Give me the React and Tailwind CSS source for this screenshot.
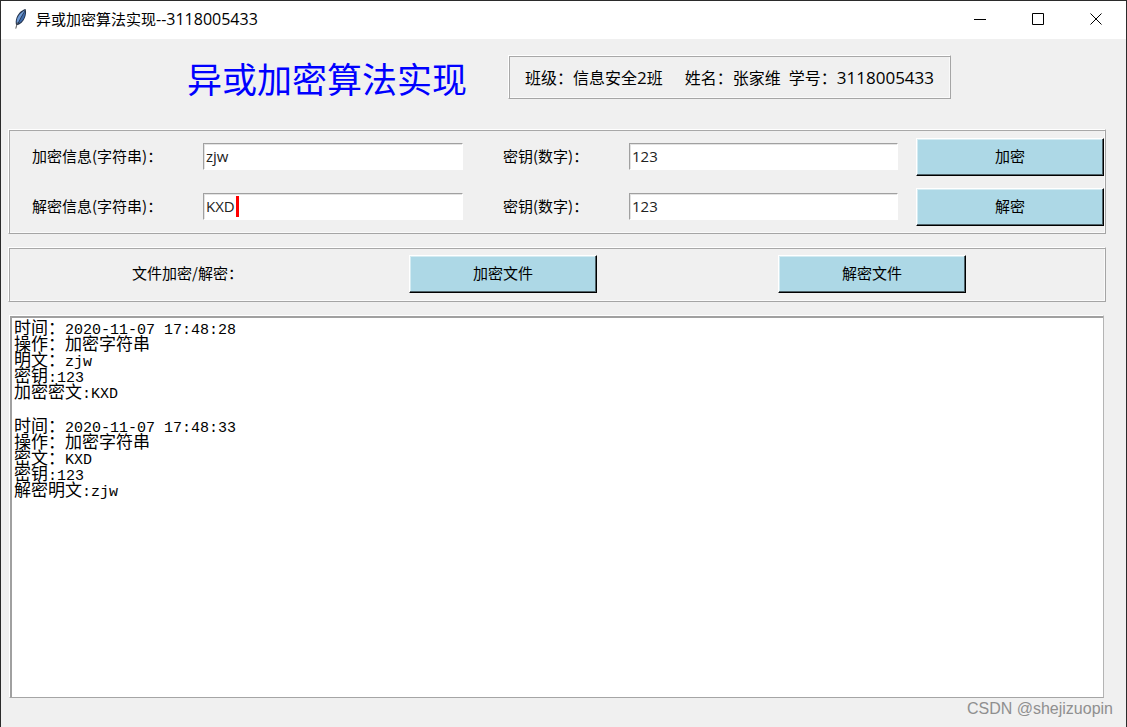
import React from "react";

const ridge =
  "border border-t-white border-l-white border-r-[#a5a5a5] border-b-[#a5a5a5] shadow-[inset_1px_1px_0_#a8a8a8,inset_-1px_-1px_0_#fafafa]";

const latinFont = "font-['Open_Sans','Noto_Sans_CJK_SC',sans-serif]";

function Feather() {
  return (
    <svg width="16" height="22" viewBox="0 0 16 22" aria-hidden="true">
      <path d="M12.6 1 C9.5 1.6 5.6 4.6 3.6 9.4 C2.5 12.3 2.4 15.2 3.3 17.6 C7.3 16.6 10.6 13.6 12 9.6 C13.2 6.4 13.4 3.4 12.6 1 Z" fill="#24344d" />
      <path d="M12 2.2 C8.4 4 5 7.4 4 11.6 C3.6 13.4 3.6 14.8 4.2 16 C6.4 11.6 9.2 6.4 12 2.2 Z" fill="#6f9bd6" />
      <path d="M12 3.4 C9.6 7.4 7 12 5.6 15.6 C8.4 14.2 10.2 11.8 11.2 9 C12 6.8 12.2 5 12 3.4 Z" fill="#3f6bab" />
      <path d="M4.5 14.5 C3.8 16.6 3.2 18.4 2.8 20.6" fill="none" stroke="#555" strokeWidth="1" />
    </svg>
  );
}

function WindowButton({ label, children }) {
  return (
    <button type="button" aria-label={label} className="flex h-full w-[58px] items-center justify-center">
      <svg width="12" height="12" viewBox="0 0 12 12" fill="none" stroke="#000" strokeWidth="1" aria-hidden="true">
        {children}
      </svg>
    </button>
  );
}

function TkButton({ children }) {
  return (
    <button
      type="button"
      className="h-[38px] w-[188px] border border-t-white border-l-white border-r-black border-b-black bg-[#add8e6] pb-[2px] text-[15px] leading-5 shadow-[inset_-1px_-1px_0_#4f6268,inset_1px_1px_0_#d3ebf2]"
    >
      {children}
    </button>
  );
}

function Entry({ id, value, caret }) {
  return (
    <div className="relative mb-[2px]">
      <input
        id={id}
        type="text"
        defaultValue={value}
        className={
          "block h-[27px] w-full border border-t-[#a0a0a0] border-l-[#a0a0a0] border-r-white border-b-white bg-white px-[2px] text-[15px] leading-5 text-[#222] shadow-[inset_1px_1px_0_#e3e3e3] outline-none " +
          latinFont
        }
      />
      {caret && <span aria-hidden="true" className="absolute top-[3px] left-[33px] h-[21px] w-[3px] bg-[#ff0000]" />}
    </div>
  );
}

function CipherRow({ name, title, text, secret, action, caret }) {
  return (
    <div className="grid h-[50px] grid-cols-[171px_260fr_166px_269fr_206px] items-center">
      <label htmlFor={name + "-text"} className="pb-[2px]">{title}</label>
      <Entry id={name + "-text"} value={text} caret={caret} />
      <label htmlFor={name + "-key"} className="pb-[2px] pl-10">密钥(数字)：</label>
      <Entry id={name + "-key"} value={secret} />
      <div className="flex justify-end">
        <TkButton>{action}</TkButton>
      </div>
    </div>
  );
}

const records = [
  [
    ["时间：", "2020-11-07 17:48:28"],
    ["操作：加密字符串", ""],
    ["明文：", "zjw"],
    ["密钥", ":123"],
    ["加密密文", ":KXD"],
  ],
  [
    ["时间：", "2020-11-07 17:48:33"],
    ["操作：加密字符串", ""],
    ["密文：", "KXD"],
    ["密钥", ":123"],
    ["解密明文", ":zjw"],
  ],
];

export default function App() {
  return (
    <div className="relative flex min-h-screen flex-col border-x border-t border-[#2b2b2b] bg-[#f0f0f0] font-['Noto_Sans_CJK_SC',sans-serif] text-[15px] leading-5 text-black">
      <div className="flex h-[38px] items-center bg-white pb-[2px] pl-3">
        <Feather />
        <span className="ml-[7px] flex-1">
          异或加密算法实现<span className={"text-[16px] " + latinFont}>--3118005433</span>
        </span>
        <div className="mr-[1px] flex h-full">
          <WindowButton label="最小化">
            <path d="M0 6.5H12" />
          </WindowButton>
          <WindowButton label="最大化">
            <path d="M0.5 0.5H11.5V11.5H0.5Z" />
          </WindowButton>
          <WindowButton label="关闭">
            <path d="M0.5 0.5L11.5 11.5M11.5 0.5L0.5 11.5" />
          </WindowButton>
        </div>
      </div>

      <main className="flex flex-1 flex-col pr-5 pb-[29px] pl-[7px]">
        <header className="flex h-[90px] items-start pt-4 pl-[179px]">
          <h1 className="text-[35px] leading-[46px] text-[#0000ff]">异或加密算法实现</h1>
          <div className={"ml-[41px] flex h-11 items-center px-4 text-[16px] " + ridge}>
            <span>
              班级：信息安全<span className={"text-[17px] " + latinFont}>2</span>班
            </span>
            <span className="ml-[22px]">姓名：张家维</span>
            <span className="ml-2">
              学号：<span className={"text-[17px] " + latinFont}>3118005433</span>
            </span>
          </div>
        </header>

        <section className={"pt-[2px] pr-[1px] pb-[1px] pl-[23px] " + ridge}>
          <CipherRow name="encrypt" title="加密信息(字符串)：" text="zjw" secret="123" action="加密" />
          <CipherRow name="decrypt" title="解密信息(字符串)：" text="KXD" secret="123" action="解密" caret />
        </section>

        <section className={"mt-[13px] grid grid-cols-[400fr_369fr_327fr] items-center pt-[7px] pb-2 " + ridge}>
          <span className="pb-[2px] pl-[123px]">文件加密/解密：</span>
          <TkButton>加密文件</TkButton>
          <TkButton>解密文件</TkButton>
        </section>

        <div className="mt-[13px] mr-[2px] ml-[1px] flex flex-1 border border-t-white border-l-white border-r-[#b4b4b4] border-b-[#a5a5a5]">
          <div
            role="log"
            className="flex flex-1 flex-col gap-[18px] border-t-2 border-l-2 border-[#a0a0a0] bg-white pt-[1px] pl-[2px] text-[17px] leading-4"
          >
            {records.map((lines, i) => (
              <div key={i}>
                {lines.map(([cjk, latin], j) => (
                  <p key={j} className="h-4 whitespace-pre">
                    {cjk}
                    {latin && <span className="font-['Liberation_Mono',monospace] text-[15px] leading-[0px]">{latin}</span>}
                  </p>
                ))}
              </div>
            ))}
          </div>
        </div>
      </main>

      <span className="absolute right-[13px] bottom-[8px] font-['Liberation_Sans',sans-serif] text-[16px] text-[#8f8f8f]">
        CSDN @shejizuopin
      </span>
    </div>
  );
}
